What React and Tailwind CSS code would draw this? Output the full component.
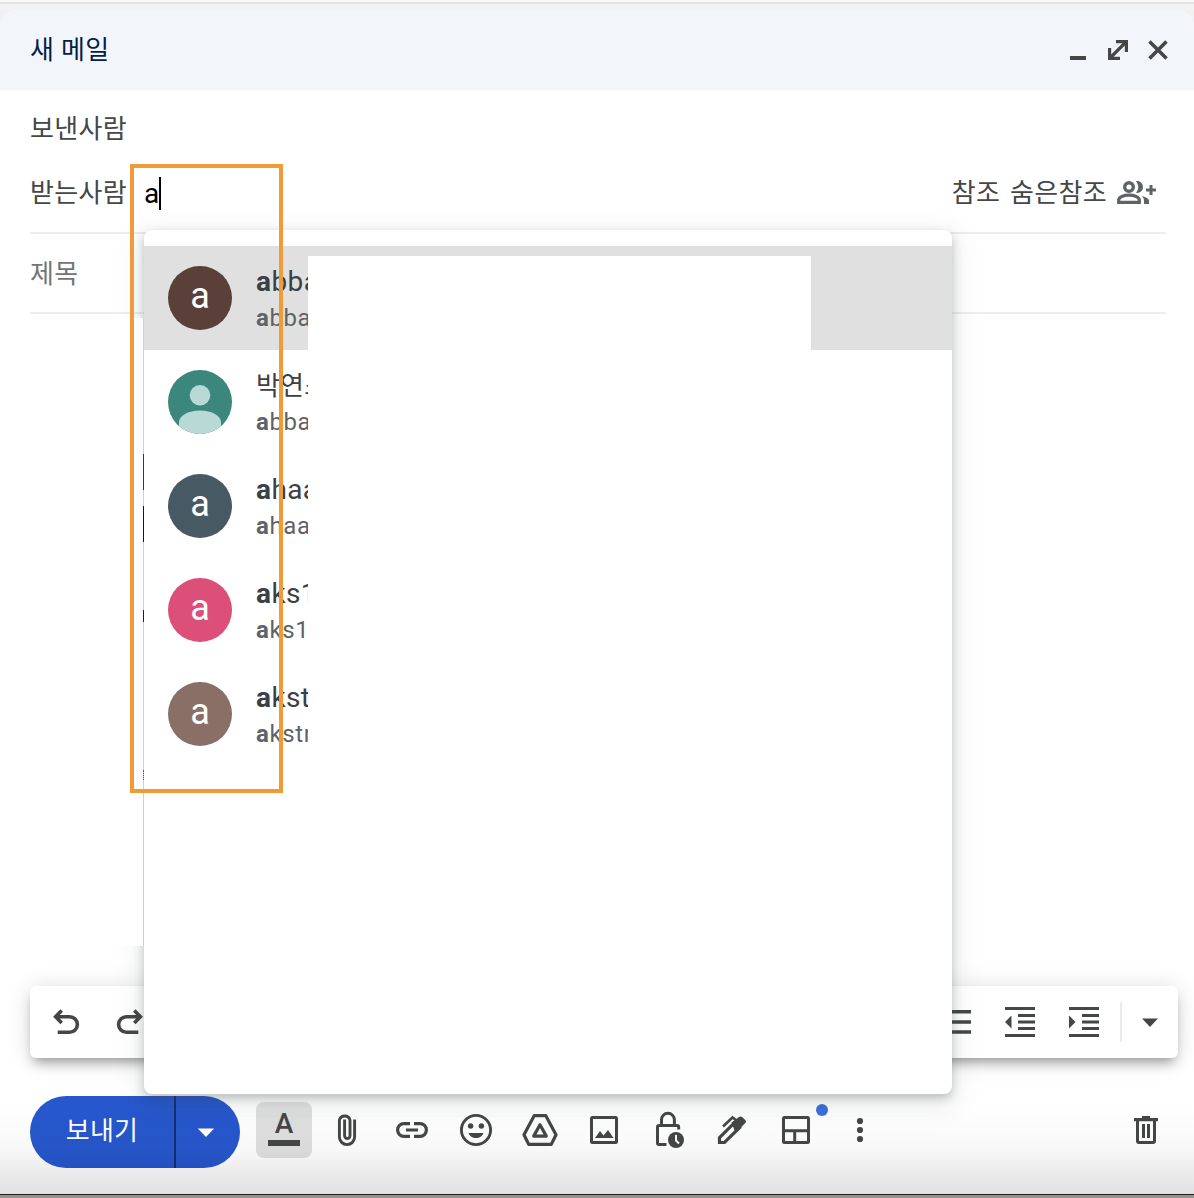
import React from 'react';

const contacts = [
  { color: 'bg-[#5a4038]', match: 'a', name: 'bbas', email: 'bbas' },
  { photo: true, match: 'a', fullName: '박연스', email: 'bbas' },
  { color: 'bg-[#475962]', match: 'a', name: 'haa', email: 'haap' },
  { color: 'bg-[#db4f79]', match: 'a', name: 'ks1', email: 'ks1' },
  { color: 'bg-[#896f66]', match: 'a', name: 'kstn', email: 'kstn' },
];

function Icon({ children, size = 40, className = '' }) {
  return (
    <svg
      width={size}
      height={size}
      viewBox={`0 0 ${size} ${size}`}
      fill="none"
      stroke="currentColor"
      strokeWidth="3"
      className={`shrink-0 ${className}`}
    >
      {children}
    </svg>
  );
}

function ToolButton({ label, children }) {
  return (
    <button aria-label={label} className="flex h-14 w-16 shrink-0 items-center justify-center">
      <Icon>{children}</Icon>
    </button>
  );
}

function Header() {
  return (
    <div className="bg-[#f1f1f1]">
      <div className="h-0.5 bg-[#f9f9f9]" />
      <div className="h-0.5 bg-[#e3e3e3]" />
      <div className="h-1.5 bg-[#f3f3f3]" />
      <header className="flex h-20 items-center justify-between rounded-t-2xl bg-[#f2f6fb] pr-4 pl-[30px]">
        <h1 className="text-[26px] font-normal tracking-[0.3px] text-[#041e49]">새 메일</h1>
        <div className="flex text-[#444746]">
          <Icon>
            <path d="M12 28h16" strokeWidth="4" />
          </Icon>
          <Icon>
            <path d="M18 11.600h12M28.400 10v12M28.500 11.500 11.500 28.500M11.600 18v12M10 28.400h12" strokeWidth="3.200" />
          </Icon>
          <Icon>
            <path d="M11.500 11.500 28.500 28.500M28.500 11.500 11.500 28.500" strokeWidth="3.600" />
          </Icon>
        </div>
      </header>
    </div>
  );
}

function Fields() {
  return (
    <div className="pr-7 pl-[30px] text-[26px] text-[#444746]">
      <div className="flex h-[77px] items-center pt-0.5 tracking-[0.3px]">보낸사람</div>
      <div className="flex h-[67px] items-start border-b-2 border-[#eceded]">
        <span className="mt-[7px] tracking-[0.3px]">받는사람</span>
        <span className="mt-1.5 ml-[17px] text-[28px] text-black">a</span>
        <span className="mt-2.5 h-[33px] w-0.5 bg-black" />
        <div className="mt-[7px] ml-auto flex items-center gap-2.5 tracking-[0.3px]">
          <span>참조</span>
          <span>숨은참조</span>
        </div>
        <svg width="40" height="28" viewBox="0 0 40 28" fill="none" stroke="#5f6368" strokeWidth="3.400" className="mt-[11px] mr-2.5 ml-[9px]">
          <circle cx="13" cy="9" r="4.300" />
          <path d="M2.700 24.300v-2.300c0-3 5-4.800 10.300-4.800s10.300 1.800 10.300 4.800v2.300z" strokeWidth="3.200" />
          <path d="M20 3.200c3.500-.8 7 1.800 7 5.800s-3.500 6.600-7 5.800c3-4 3-7.600 0-11.600z" fill="#5f6368" stroke="none" />
          <path d="M26 18.200c4 .8 7 2.400 7 4.600V26h-5v-3.500c0-1.800-.8-3.200-2-4.300z" fill="#5f6368" stroke="none" />
          <path d="M30 12h10M35 7v10" strokeWidth="3" />
        </svg>
      </div>
      <div className="flex h-20 items-center border-b-2 border-[#eceded] pt-0.5 tracking-[0.3px] text-[#717575]">제목</div>
    </div>
  );
}

function FormatBar() {
  return (
    <div className="mr-4 ml-[30px] flex h-[72px] items-center rounded-md bg-white pl-1 text-[#444746] shadow-[0_8px_12px_-4px_rgba(0,0,0,0.35),0_2px_24px_rgba(0,0,0,0.14)]">
      <ToolButton label="실행취소">
        <path d="M15.700 8.400 9.600 14.700l6.100 6.300M9.600 14.700h14a7.800 7.800 0 0 1 0 15.600H11.700" strokeWidth="3.600" />
      </ToolButton>
      <ToolButton label="재실행">
        <path d="M24.300 8.400 30.400 14.700l-6.100 6.300M30.400 14.700h-14a7.800 7.800 0 0 0 0 15.600H28.300" strokeWidth="3.600" />
      </ToolButton>
      <div className="ml-auto flex items-center">
        <ToolButton label="목록">
          <path d="M6 9.700h29M6 20h29M6 30h29" strokeWidth="3.600" />
        </ToolButton>
        <ToolButton label="내어쓰기">
          <path d="M5 6.600h30M18 13.400h17M18 20h17M18 26.600h17M5 33.500h30" />
          <path d="M11.500 13.500v13L5 20z" fill="currentColor" stroke="none" />
        </ToolButton>
        <ToolButton label="들여쓰기">
          <path d="M5 6.600h30M18 13.400h17M18 20h17M18 26.600h17M5 33.500h30" />
          <path d="M5 13.500v13l6.500-6.500z" fill="currentColor" stroke="none" />
        </ToolButton>
        <span className="ml-1 h-10 w-0.5 bg-[#e9eaea]" />
        <button aria-label="더보기" className="flex h-14 w-14 items-center justify-center">
          <Icon>
            <path d="M12 16.500h16l-8 8.500z" fill="currentColor" stroke="none" />
          </Icon>
        </button>
      </div>
    </div>
  );
}

function BottomBar() {
  return (
    <div className="mt-[38px] mr-4 ml-[30px] flex h-[72px] items-center text-[#444746]">
      <div className="flex h-[72px] w-[210px] shrink-0 overflow-hidden rounded-full bg-[#2657cc] text-white">
        <button className="w-36 pb-0.5 text-[26px] tracking-[0.3px]">보내기</button>
        <span className="w-0.5 bg-[#142f70]" />
        <button aria-label="전송 옵션" className="flex flex-1 items-center justify-center pr-1">
          <Icon>
            <path d="M11.800 16.500h16.400l-8.200 8.500z" fill="currentColor" stroke="none" />
          </Icon>
        </button>
      </div>
      <button className="mb-1 ml-4 flex h-14 w-14 flex-col items-center rounded-lg bg-[#e0e0e0] pt-2">
        <span className="h-[30px] text-[28px] leading-[28px] font-medium">A</span>
        <span className="h-1.5 w-8 bg-[#444746]" />
      </button>
      <div className="mb-1 ml-1 flex">
        <ToolButton label="파일 첨부">
          <path d="M26.600 10v17.500a7.600 7.600 0 0 1-15.200 0V10.800a5.400 5.400 0 0 1 10.600 0v15.500a2.700 2.700 0 0 1-5.400 0V10" strokeWidth="2.900" transform="translate(0 -.5)" />
        </ToolButton>
        <ToolButton label="링크 삽입">
          <path d="M18 13.600h-6a6.400 6.400 0 0 0 0 12.800h6M22 13.600h6a6.400 6.400 0 0 1 0 12.800h-6M14 20h12" strokeWidth="3.200" />
        </ToolButton>
        <ToolButton label="이모티콘 삽입">
          <circle cx="20" cy="20" r="14.600" strokeWidth="2.900" />
          <g fill="currentColor" stroke="none">
            <circle cx="14.600" cy="16" r="2.700" />
            <circle cx="25.400" cy="16" r="2.700" />
            <path d="M12.500 23h15c-1 3-4 5-7.500 5s-6.500-2-7.500-5z" />
          </g>
        </ToolButton>
        <ToolButton label="드라이브">
          <path d="M14.300 5.600h11.400l10.300 19.100-4.700 9.700H8.700l-4.700-9.700z" strokeWidth="3.200" strokeLinejoin="round" />
          <path d="M20 14.800l6.300 11.300H13.700z" strokeWidth="3.200" strokeLinejoin="round" />
        </ToolButton>
        <ToolButton label="사진 삽입">
          <rect x="7.500" y="7.500" width="25" height="25" rx="1" />
          <path d="M11 28l5-7 3.500 4.500L24 20l5.500 8z" fill="currentColor" stroke="none" />
        </ToolButton>
        <ToolButton label="비밀 모드">
          <path d="M13.500 15v-5.200a6.400 6.400 0 0 1 12.900 0V15M18.500 34.500H11q-1.500 0-1.500-1.500V17q0-1.500 1.500-1.500h18q1.700 0 1.700 1.500v2.500" />
          <circle cx="28" cy="30" r="8" fill="currentColor" stroke="none" />
          <path d="M28 25v5.500l3 3" stroke="#fafafa" strokeWidth="2" />
        </ToolButton>
        <ToolButton label="서명 삽입">
          <path d="M11 16.500 20.500 7.500l3.500 2.500" strokeWidth="2.600" />
          <path d="M7.500 32.500v-4.800L22.500 12.700l5 5-15 14.800z" strokeWidth="3.200" />
          <path d="M19.500 12.500l7.500-5.500q1.500-1.200 3 0l3.500 3.300q1 1.200 0 2.500L23.500 23z" fill="currentColor" stroke="none" />
        </ToolButton>
        <div className="relative">
          <ToolButton label="레이아웃 선택">
            <rect x="7.500" y="7.500" width="25" height="25" rx="1" />
            <path d="M7 20.700h26M18.700 20.700V33" />
          </ToolButton>
          <span className="absolute top-0.5 right-0 h-3 w-3 rounded-full bg-[#3a70dd]" />
        </div>
        <ToolButton label="옵션 더보기">
          <g fill="currentColor" stroke="none">
            <circle cx="20" cy="11" r="3.100" />
            <circle cx="20" cy="20" r="3.100" />
            <circle cx="20" cy="29" r="3.100" />
          </g>
        </ToolButton>
      </div>
      <div className="mb-1 ml-auto">
        <ToolButton label="임시보관 메일 삭제">
          <path d="M8 9.600h24M16 7.500h8" strokeWidth="3.200" />
          <path d="M11.500 10v21q0 1.500 1.500 1.500h14q1.500 0 1.500-1.500V10M17.500 14v14M22.500 14v14" />
        </ToolButton>
      </div>
    </div>
  );
}

function Avatar({ contact }) {
  if (contact.photo) {
    return (
      <svg width="64" height="64" viewBox="0 0 64 64" className="mt-5 ml-6 shrink-0 rounded-full bg-[#3b877b]">
        <circle cx="32" cy="25.300" r="10.300" fill="#b9d9d6" />
        <path d="M11 64V52c0-6 9-11.500 21-11.500S53 46 53 52v12z" fill="#b9d9d6" />
      </svg>
    );
  }
  return (
    <div className={`mt-5 ml-6 flex h-16 w-16 shrink-0 items-center justify-center rounded-full pb-1 text-[36px] text-white ${contact.color}`}>
      {contact.match}
    </div>
  );
}

function Suggestions() {
  return (
    <div className="absolute top-[230px] left-36 h-[864px] w-[808px] rounded-lg bg-white pt-4 shadow-[0_4px_10px_rgba(60,64,67,0.28),0_8px_24px_6px_rgba(60,64,67,0.1)]">
      {contacts.map((contact, i) => (
        <div key={i} className={`flex h-[104px] ${i === 0 ? 'bg-[#e0e0e0]' : 'bg-white'}`}>
          <Avatar contact={contact} />
          <div className="ml-6 w-[52px] overflow-hidden pt-[17px] whitespace-nowrap">
            <p className="h-[37px] text-[28px] leading-[38px] tracking-[0.4px] text-[#3c4043]">
              {contact.fullName ? (
                <span className="inline-block text-[26px] leading-[34px] tracking-[0.2px]">{contact.fullName}</span>
              ) : (
                <>
                  <b>{contact.match}</b>
                  {contact.name}
                </>
              )}
            </p>
            <p className="text-[24px] leading-[36px] tracking-[0.6px] text-[#5f6368]">
              <b>{contact.match}</b>
              {contact.email}
            </p>
          </div>
          <div className="mt-2.5 w-[503px] bg-white" />
        </div>
      ))}
    </div>
  );
}

export default function App() {
  return (
    <div className="relative flex h-[1198px] w-[1194px] flex-col overflow-hidden bg-white font-[Roboto,'Noto_Sans_CJK_KR',sans-serif]">
      <Header />
      <Fields />
      <div className="flex-1" />
      <FormatBar />
      <BottomBar />
      <div className="mt-[26px] h-px shrink-0 bg-[#1c1a1a]" />
      <div className="h-[3px] shrink-0 bg-[#9b918d]" />

      {/* bottom fade */}
      <div className="pointer-events-none absolute inset-x-0 bottom-1 h-[88px] bg-linear-to-b from-black/0 via-black/3 to-black/12" />

      <Suggestions />

      {/* edge of the message body next to the dropdown */}
      <div className="absolute top-[318px] left-[104px] flex h-[628px] w-10 flex-col items-end border-r border-[#cfcfcf] bg-white">
        <span className="-mr-px mt-[136px] h-9 w-px bg-[#3d20b0]" />
        <span className="-mr-px mt-4 h-9 w-px bg-[#10104c]" />
        <span className="-mr-px mt-[68px] h-3 w-px bg-[#202020]" />
        <span className="-mr-px mt-[148px] h-2.5 w-px border-r border-dotted border-[#555]" />
      </div>

      {/* highlight frame */}
      <div className="absolute top-[164px] left-[130px] h-[629px] w-[153px] border-4 border-[#f09a38]" />
    </div>
  );
}
